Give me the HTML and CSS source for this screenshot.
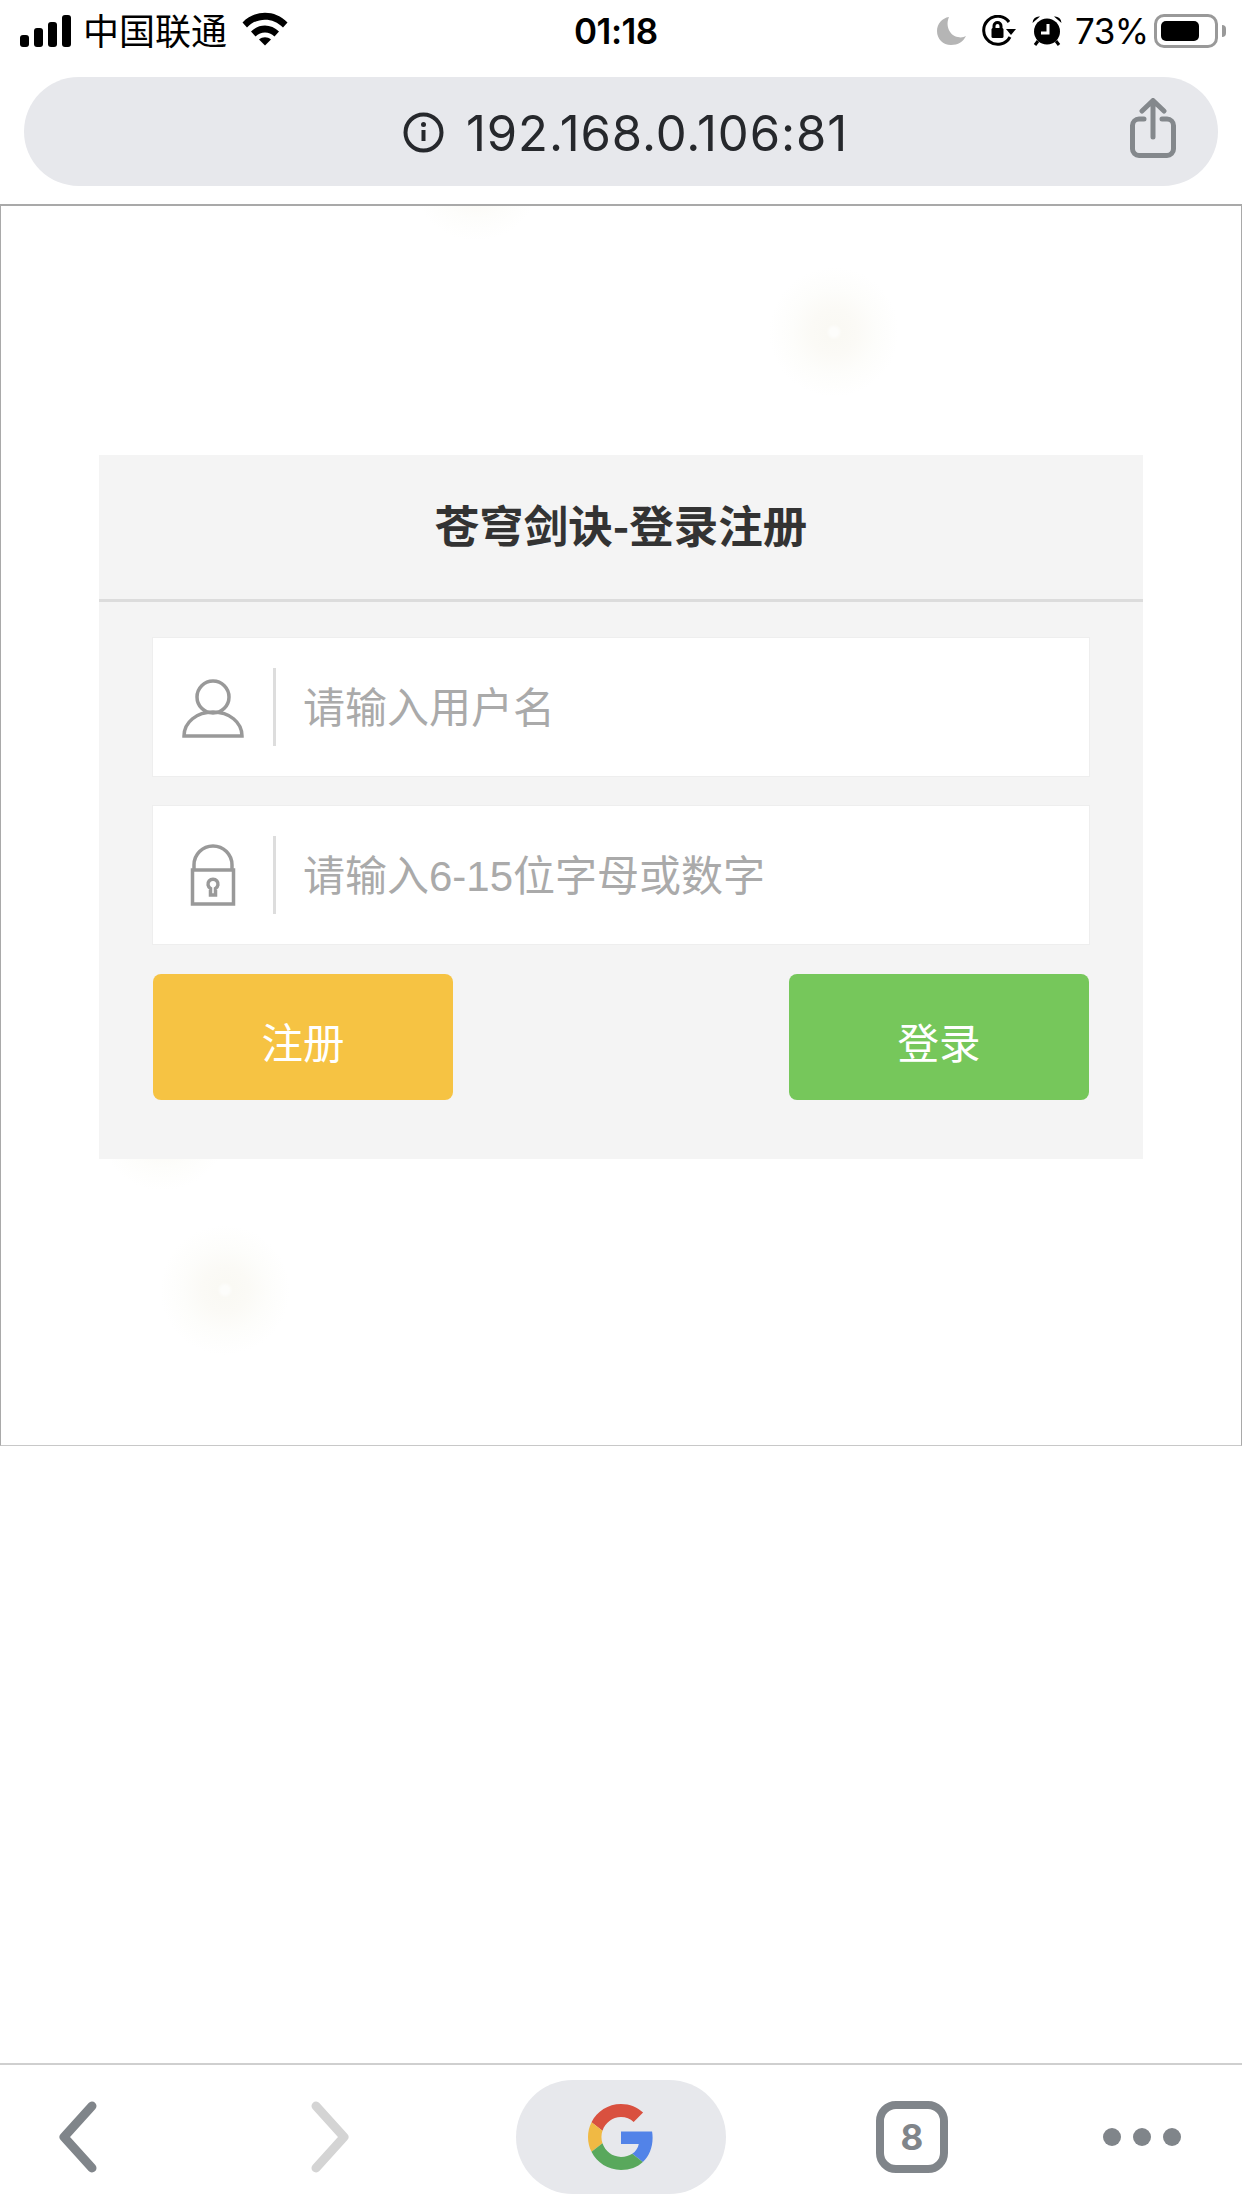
FILE: index.html
```html
<!DOCTYPE html>
<html>
<head>
    <title>苍穹剑诀-登录注册</title>
    <link rel="stylesheet" href="styles.css">
</head>
<body>
    <div class="page">
        <div class="status-bar">
            <div class="signal">
                <i class="bar-1"></i><i class="bar-2"></i><i class="bar-3"></i><i class="bar-4"></i>
            </div>
            <span class="carrier">中国联通</span>
            <svg class="wifi" width="46" height="34" viewBox="0 0 46 34">
                <path d="M0.5 10.5C13 -2.500 33 -2.500 45.500 10.500L41 15.500C31 5 15 5 5 15.500Z"/>
                <path d="M9 19.500C17 11.500 29 11.500 37 19.500L32.500 24.500C27 19 19 19 13.500 24.500Z"/>
                <path d="M17 27.500C20.500 24.500 25.500 24.500 29 27.500L23 33.500Z"/>
            </svg>
            <span class="time">01:18</span>
            <svg class="moon" width="29" height="28" viewBox="0 0 29 28">
                <path d="M12 0C5 1 0 7 0 14C0 22 6 28 14 28C21 28 26 25 29 19C27 20 24 21 21 20C13 19 8 9 12 0Z"/>
            </svg>
            <svg class="rotate-lock" width="34" height="32" viewBox="0 0 34 32">
                <path class="ring" d="M27 7A14 14 0 1 0 28 22"/>
                <path d="M34 14L24 14L29 20Z"/>
                <rect x="9.500" y="13" width="12" height="10" rx="1.500"/>
                <path class="shackle" d="M12 14V11A3.500 3.500 0 0 1 19 11V14"/>
            </svg>
            <svg class="alarm" width="30" height="30" viewBox="0 0 30 30">
                <circle cx="15" cy="15.500" r="13"/>
                <path d="M0.500 7A6.500 6.500 0 0 1 8 0.500ZM29.500 7A6.500 6.500 0 0 0 22 0.500Z"/>
                <path class="feet" d="M6 25L3 29M24 25L27 29"/>
                <path class="hands" d="M16 8V17H9"/>
            </svg>
            <span class="percent">73%</span>
            <div class="battery"><div class="battery-fill"></div></div>
            <div class="battery-nub"></div>
        </div>

        <div class="address-bar">
            <div class="url">
                <svg width="41" height="41" viewBox="0 0 41 41">
                    <circle class="info-ring" cx="20.500" cy="20.500" r="18"/>
                    <circle class="info-dot" cx="20.500" cy="12.500" r="2.500"/>
                    <path class="info-stem" d="M20.500 18V29"/>
                </svg>
                <span class="url-text">192.168.0.106:81</span>
            </div>
            <svg class="share" width="46" height="60" viewBox="0 0 46 60">
                <path d="M14 21H9A6.500 6.500 0 0 0 2.500 27.500V51A6.500 6.500 0 0 0 9 57.500H37A6.500 6.500 0 0 0 43.500 51V27.500A6.500 6.500 0 0 0 37 21H32"/>
                <path d="M23 39V3M12 13L23 2.500L34 13"/>
            </svg>
        </div>

        <div class="frame">
            <div class="glow glow-top"></div>
            <div class="glow glow-right"></div>
            <div class="glow glow-card"></div>
            <div class="glow glow-low"></div>
            <div class="login-card">
                <h1>苍穹剑诀-登录注册</h1>
                <div class="login-body">
                    <div class="field">
                        <div class="field-icon">
                            <svg width="62" height="62" viewBox="0 0 62 62">
                                <circle cx="31" cy="21" r="16"/>
                                <path d="M2 60C2 46 15 36 31 36C47 36 60 46 60 60Z"/>
                            </svg>
                        </div>
                        <span class="placeholder">请输入用户名</span>
                    </div>
                    <div class="field">
                        <div class="field-icon">
                            <svg width="48" height="62" viewBox="0 0 48 62">
                                <path d="M5 27V21A19 19 0 0 1 43 21V27"/>
                                <rect x="3.500" y="26" width="41" height="34"/>
                                <path d="M21.500 44.500V51H26.500V44.500A5 5 0 1 0 21.500 44.500Z"/>
                            </svg>
                        </div>
                        <span class="placeholder">请输入6-15位字母或数字</span>
                    </div>
                    <div class="actions">
                        <button class="btn btn-register">注册</button>
                        <button class="btn btn-login">登录</button>
                    </div>
                </div>
            </div>
        </div>

        <div class="toolbar">
            <svg class="nav-back" width="40" height="72" viewBox="0 0 40 72">
                <path d="M34 5L6 36L34 67"/>
            </svg>
            <svg class="nav-forward" width="40" height="72" viewBox="0 0 40 72">
                <path d="M6 5L34 36L6 67"/>
            </svg>
            <div class="search-pill">
                <svg width="66" height="66" viewBox="0 0 48 48">
                    <path fill="#d9503f" d="M24 9.500c3.540 0 6.710 1.220 9.210 3.600l6.850-6.850C35.900 2.380 30.470 0 24 0 14.620 0 6.510 5.380 2.560 13.220l7.980 6.190C12.430 13.720 17.740 9.500 24 9.500z"/>
                    <path fill="#5283e8" d="M46.980 24.550c0-1.570-.150-3.090-.380-4.550H24v9.020h12.940c-.580 2.960-2.260 5.480-4.780 7.180l7.730 6c4.510-4.180 7.090-10.360 7.090-17.650z"/>
                    <path fill="#f0b944" d="M10.530 28.590c-.480-1.450-.760-2.990-.760-4.590s.270-3.140.760-4.590l-7.980-6.190C.920 16.460 0 20.120 0 24c0 3.880.920 7.540 2.560 10.780l7.970-6.190z"/>
                    <path fill="#59a85c" d="M24 48c6.480 0 11.930-2.130 15.890-5.810l-7.730-6c-2.150 1.450-4.920 2.300-8.160 2.300-6.260 0-11.570-4.220-13.470-9.910l-7.980 6.190C6.510 42.620 14.620 48 24 48z"/>
                </svg>
            </div>
            <div class="tab-count">8</div>
            <div class="more"><i></i><i></i><i></i></div>
        </div>
    </div>
</body>
</html>
```

FILE: styles.css
```css
* {
    box-sizing: border-box;
}
body {
    margin: 0;
    background: white;
    font-family: Inter, "Noto Sans CJK SC", sans-serif;
}
.page {
    display: flex;
    flex-direction: column;
    width: 1242px;
    height: 2208px;
    overflow: hidden;
}

/* status bar */
.status-bar {
    display: flex;
    align-items: center;
    height: 62px;
    padding-left: 20px;
    color: black;
}
.signal {
    display: flex;
    align-items: flex-end;
    gap: 5px;
    height: 32px;
    margin-top: -1px;
}
.signal i {
    display: block;
    width: 9px;
    border-radius: 3px;
    background: black;
}
.signal .bar-1 { height: 12px; }
.signal .bar-2 { height: 19px; }
.signal .bar-3 { height: 25px; }
.signal .bar-4 { height: 32px; }
.carrier {
    margin: -4px 0 0 12px;
    width: 146px;
    font-family: "Noto Sans CJK SC", sans-serif;
    font-size: 36px;
}
.wifi {
    margin-left: 13px;
    margin-top: -4px;
}
.time {
    margin-left: 286px;
    width: 93px;
    font-size: 35px;
    font-weight: 600;
    letter-spacing: -0.5px;
    white-space: nowrap;
}
.moon {
    margin-left: 270px;
    fill: #b5b5b5;
}
.rotate-lock {
    margin-left: 16px;
}
.rotate-lock .ring,
.rotate-lock .shackle {
    fill: none;
    stroke: black;
    stroke-width: 3;
}
.alarm {
    margin-left: 16px;
}
.alarm .feet {
    stroke: black;
    stroke-width: 3;
}
.alarm .hands {
    fill: none;
    stroke: white;
    stroke-width: 3;
}
.percent {
    margin-left: 13px;
    width: 72px;
    font-size: 35px;
    letter-spacing: -0.5px;
}
.battery {
    margin-left: 7px;
    width: 64px;
    height: 34px;
    padding: 4px;
    border: 3px solid #999;
    border-radius: 10px;
}
.battery-fill {
    width: 38px;
    height: 20px;
    border-radius: 5px;
    background: black;
}
.battery-nub {
    width: 4px;
    height: 12px;
    margin-left: 4px;
    border-radius: 0 4px 4px 0;
    background: #999;
}

/* address bar */
.address-bar {
    position: relative;
    display: flex;
    align-items: center;
    justify-content: center;
    height: 109px;
    margin: 15px 24px 18px;
    border-radius: 55px;
    background: #e7e8ec;
}
.url {
    display: flex;
    align-items: center;
    gap: 22px;
    margin-left: 9px;
    color: #26282c;
    font-size: 49px;
    letter-spacing: 0.9px;
}
.url svg {
    margin-top: 2px;
}
.url-text {
    margin-top: 3px;
}
.info-ring {
    fill: none;
    stroke: #26282c;
    stroke-width: 4;
}
.info-dot {
    fill: #26282c;
}
.info-stem {
    stroke: #26282c;
    stroke-width: 4;
}
.share {
    position: absolute;
    right: 42px;
    top: 21px;
    fill: none;
    stroke: #84888c;
    stroke-width: 5;
    stroke-linecap: round;
    stroke-linejoin: round;
}

/* page inside the browser */
.frame {
    position: relative;
    height: 1242px;
    padding: 249px 98px 0;
    overflow: hidden;
    border: 1px solid #a9a9a9;
    border-top-width: 2px;
    border-bottom: 1px solid #c8c8c8;
}
.glow {
    position: absolute;
    width: 130px;
    height: 130px;
    border-radius: 50%;
    background: radial-gradient(circle closest-side, #fdfdfb 0, #fdfdfb 6%, #faf9f4 12%, #fbfaf6 35%, #fdfdfb 65%, white 100%);
}
.glow-top { left: 410px; top: -95px; }
.glow-right { left: 768px; top: 61px; }
.glow-card { left: 97px; top: 855px; }
.glow-low { left: 159px; top: 1019px; }
.login-card {
    position: relative;
    height: 704px;
    background: #f4f4f4;
}
.login-card h1 {
    margin: 0;
    height: 147px;
    border-bottom: 3px solid #dcdcdc;
    color: #333;
    font-family: "Noto Sans CJK SC", sans-serif;
    font-size: 44.500px;
    font-weight: 700;
    line-height: 137px;
    text-align: center;
}
.login-body {
    display: flex;
    flex-direction: column;
    gap: 30px;
    padding: 36px 54px 0;
}
.field {
    display: flex;
    align-items: center;
    height: 138px;
    box-shadow: 0 0 0 1px #eee;
    background: white;
}
.field-icon {
    display: flex;
    align-items: center;
    justify-content: center;
    width: 123px;
    height: 78px;
    border-right: 3px solid #ddd;
}
.field-icon svg {
    fill: none;
    stroke: #999;
    stroke-width: 3.500;
}
.placeholder {
    margin: -5px 0 0 27px;
    color: #aaa;
    font-family: "Liberation Sans", "Noto Sans CJK SC", sans-serif;
    font-size: 42px;
}
.actions {
    display: flex;
    justify-content: space-between;
}
.btn {
    width: 300px;
    height: 126px;
    padding: 8px 0 0;
    border: none;
    border-radius: 8px;
    color: white;
    font-family: "Noto Sans CJK SC", sans-serif;
    font-size: 41.500px;
}
.btn-register {
    background: #f6c343;
}
.btn-login {
    background: #76c75b;
}

/* bottom toolbar */
.toolbar {
    display: flex;
    align-items: center;
    height: 145px;
    margin-top: auto;
    border-top: 2px solid #cfcfcf;
}
.toolbar svg path {
    stroke-linecap: round;
    stroke-linejoin: round;
}
.nav-back {
    margin-left: 58px;
    fill: none;
    stroke: #80858a;
    stroke-width: 9;
}
.nav-forward {
    margin-left: 212px;
    fill: none;
    stroke: #d4d4d4;
    stroke-width: 9;
}
.search-pill {
    display: flex;
    align-items: center;
    justify-content: center;
    width: 210px;
    height: 114px;
    margin-left: 166px;
    border-radius: 57px;
    background: #e7e8ec;
}
.tab-count {
    display: flex;
    align-items: center;
    justify-content: center;
    width: 72px;
    height: 72px;
    margin-left: 150px;
    border: 8px solid #80858a;
    border-radius: 20px;
    color: #80858a;
    font-size: 35px;
    font-weight: 700;
}
.more {
    display: flex;
    gap: 12px;
    margin-left: 155px;
}
.more i {
    display: block;
    width: 18px;
    height: 18px;
    border-radius: 50%;
    background: #80858a;
}
```
